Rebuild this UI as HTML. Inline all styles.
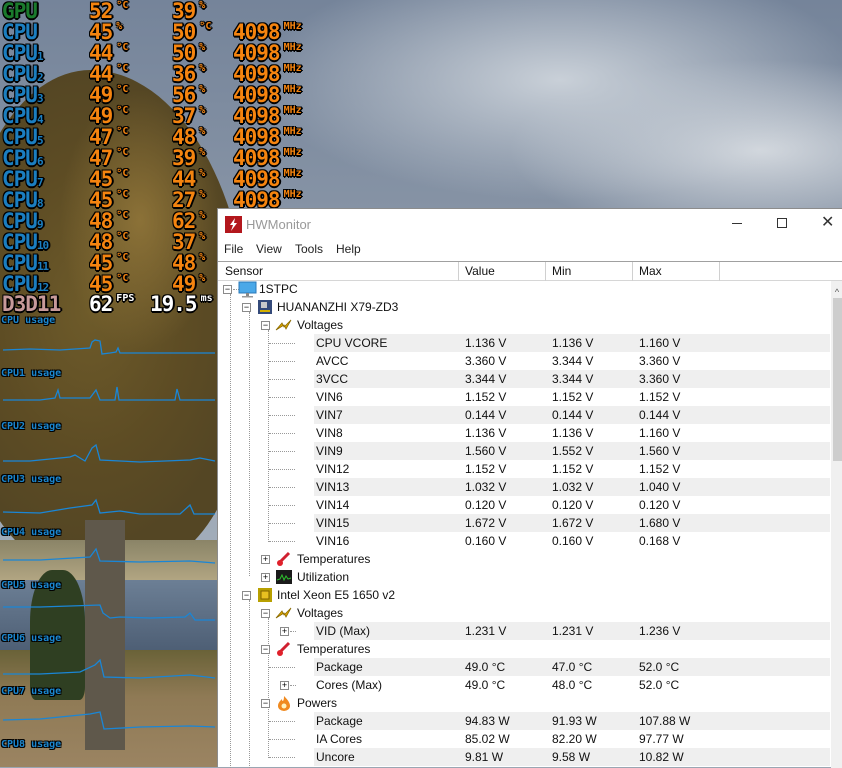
<!DOCTYPE html>
<html><head><meta charset="utf-8">
<style>
*{margin:0;padding:0;box-sizing:border-box}
body{width:842px;height:767px;overflow:hidden;position:relative;background:#9aa6b2;font-family:"Liberation Sans",sans-serif}
.bg{position:absolute;left:0;top:0;width:842px;height:767px;
background:
radial-gradient(ellipse 300px 120px at 560px 80px,#c9d0d8 0%,rgba(201,208,216,0) 100%),
radial-gradient(ellipse 250px 90px at 760px 150px,#d3d8de 0%,rgba(211,216,222,0) 100%),
linear-gradient(180deg,#75849a 0%,#8e9aaa 40%,#b4bec8 100%)}
.tree{position:absolute;left:-40px;top:70px;width:290px;height:500px;border-radius:45% 55% 40% 40%;
background:radial-gradient(ellipse 160px 240px at 130px 240px,#6e5b2a 0%,#5d4c24 60%,#544624 100%)}
.tree2{position:absolute;left:60px;top:90px;width:160px;height:260px;border-radius:50%;background:radial-gradient(ellipse 80px 130px at 80px 130px,rgba(150,122,60,.8),rgba(120,100,50,0))}
.trunk{position:absolute;left:85px;top:520px;width:40px;height:230px;background:#5f584b}
.water{position:absolute;left:0;top:580px;width:220px;height:70px;background:linear-gradient(180deg,#6c7f95,#4e5f75)}
.shore{position:absolute;left:0;top:540px;width:220px;height:45px;background:linear-gradient(180deg,#8a8467,#b6a985)}
.ground{position:absolute;left:0;top:650px;width:220px;height:117px;background:linear-gradient(180deg,#6a6238,#8f7a55 40%,#9b8462)}
.pine{position:absolute;left:30px;top:570px;width:55px;height:130px;background:#2f3f22;border-radius:40% 40% 10% 10%}
.ov{position:absolute;font-family:"DejaVu Sans Mono",monospace;font-weight:bold;font-size:21px;line-height:21px;color:#f5840f;
text-shadow:-1px -1px 0 #000,1px -1px 0 #000,-1px 1px 0 #000,1px 1px 0 #000,0 2px 0 #000,2px 0 0 #000;letter-spacing:-1px}
.lb{color:#1b7ec0}
.u{font-size:10px;vertical-align:top;line-height:10px;margin-left:4px;letter-spacing:0}
.sub{font-size:11px}
.us{position:absolute;left:1px;font-family:"DejaVu Sans Mono",monospace;font-weight:bold;font-size:10px;color:#1a86cf;text-shadow:-1px -1px 0 #000,1px -1px 0 #000,-1px 1px 0 #000,1px 1px 0 #000}
.win{position:absolute;left:217px;top:208px;width:625px;height:559px;background:#fff;border-top:1px solid #8c8c8c;border-left:1px solid #8c8c8c}
.title{position:absolute;left:28px;top:8px;font-size:13px;color:#999}
.menu{position:absolute;top:33px;font-size:12px;color:#222}
.hdr{position:absolute;top:52px;left:0;width:625px;height:20px;background:#fff;border-top:1px solid #a0a0a0;border-bottom:1px solid #d6d6d6}
.hc{position:absolute;top:2px;font-size:12px;color:#111}
.sep{position:absolute;top:0;width:1px;height:19px;background:#d0d0d0}
.row{position:absolute;left:0;width:612px;height:18px;font-size:12px;color:#111}
.row span{position:absolute;top:2px;white-space:nowrap}
.sh{position:absolute;left:96px;width:516px;height:18px;background:#efefef}
.box{position:absolute;width:9px;height:9px;border:1px solid #8a8a8a;background:#fff;font-size:9px;line-height:7px;text-align:center;color:#000}
.dv{position:absolute;border-left:1px dotted #999}
.dh{position:absolute;border-top:1px dotted #999}
</style></head><body>
<div class="bg"></div>
<div class="tree"></div><div class="tree2"></div>
<div class="shore"></div><div class="water"></div><div class="ground"></div>
<div class="pine"></div><div class="trunk"></div>

<div class="ov" style="left:2px;top:1px"><span style="color:#1a7a2c">GPU</span></div>
<div class="ov" style="left:89px;top:1px">52<span class="u">°C</span></div>
<div class="ov" style="left:172px;top:1px">39<span class="u">%</span></div>
<div class="ov lb" style="left:2px;top:22px">CPU</div>
<div class="ov" style="left:89px;top:22px">45<span class="u">%</span></div>
<div class="ov" style="left:172px;top:22px">50<span class="u">°C</span></div>
<div class="ov" style="left:233px;top:22px">4098<span class="u">MHz</span></div>
<div class="ov" style="left:2px;top:294px;color:#c89a9a">D3D11</div>
<div class="ov" style="left:89px;top:294px;color:#fff">62<span class="u">FPS</span></div>
<div class="ov" style="left:150px;top:294px;color:#fff">19.5<span class="u">ms</span></div>

<div class="ov lb" style="left:2px;top:43px">CPU<span class="sub">1</span></div><div class="ov" style="left:89px;top:43px">44<span class="u">°C</span></div><div class="ov" style="left:172px;top:43px">50<span class="u">%</span></div><div class="ov" style="left:233px;top:43px">4098<span class="u">MHz</span></div>
<div class="ov lb" style="left:2px;top:64px">CPU<span class="sub">2</span></div><div class="ov" style="left:89px;top:64px">44<span class="u">°C</span></div><div class="ov" style="left:172px;top:64px">36<span class="u">%</span></div><div class="ov" style="left:233px;top:64px">4098<span class="u">MHz</span></div>
<div class="ov lb" style="left:2px;top:85px">CPU<span class="sub">3</span></div><div class="ov" style="left:89px;top:85px">49<span class="u">°C</span></div><div class="ov" style="left:172px;top:85px">56<span class="u">%</span></div><div class="ov" style="left:233px;top:85px">4098<span class="u">MHz</span></div>
<div class="ov lb" style="left:2px;top:106px">CPU<span class="sub">4</span></div><div class="ov" style="left:89px;top:106px">49<span class="u">°C</span></div><div class="ov" style="left:172px;top:106px">37<span class="u">%</span></div><div class="ov" style="left:233px;top:106px">4098<span class="u">MHz</span></div>
<div class="ov lb" style="left:2px;top:127px">CPU<span class="sub">5</span></div><div class="ov" style="left:89px;top:127px">47<span class="u">°C</span></div><div class="ov" style="left:172px;top:127px">48<span class="u">%</span></div><div class="ov" style="left:233px;top:127px">4098<span class="u">MHz</span></div>
<div class="ov lb" style="left:2px;top:148px">CPU<span class="sub">6</span></div><div class="ov" style="left:89px;top:148px">47<span class="u">°C</span></div><div class="ov" style="left:172px;top:148px">39<span class="u">%</span></div><div class="ov" style="left:233px;top:148px">4098<span class="u">MHz</span></div>
<div class="ov lb" style="left:2px;top:169px">CPU<span class="sub">7</span></div><div class="ov" style="left:89px;top:169px">45<span class="u">°C</span></div><div class="ov" style="left:172px;top:169px">44<span class="u">%</span></div><div class="ov" style="left:233px;top:169px">4098<span class="u">MHz</span></div>
<div class="ov lb" style="left:2px;top:190px">CPU<span class="sub">8</span></div><div class="ov" style="left:89px;top:190px">45<span class="u">°C</span></div><div class="ov" style="left:172px;top:190px">27<span class="u">%</span></div><div class="ov" style="left:233px;top:190px">4098<span class="u">MHz</span></div>
<div class="ov lb" style="left:2px;top:211px">CPU<span class="sub">9</span></div><div class="ov" style="left:89px;top:211px">48<span class="u">°C</span></div><div class="ov" style="left:172px;top:211px">62<span class="u">%</span></div>
<div class="ov lb" style="left:2px;top:232px">CPU<span class="sub">10</span></div><div class="ov" style="left:89px;top:232px">48<span class="u">°C</span></div><div class="ov" style="left:172px;top:232px">37<span class="u">%</span></div>
<div class="ov lb" style="left:2px;top:253px">CPU<span class="sub">11</span></div><div class="ov" style="left:89px;top:253px">45<span class="u">°C</span></div><div class="ov" style="left:172px;top:253px">48<span class="u">%</span></div>
<div class="ov lb" style="left:2px;top:274px">CPU<span class="sub">12</span></div><div class="ov" style="left:89px;top:274px">45<span class="u">°C</span></div><div class="ov" style="left:172px;top:274px">49<span class="u">%</span></div>

<div class="us" style="top:315px">CPU usage</div>
<div class="us" style="top:368px">CPU1 usage</div>
<div class="us" style="top:421px">CPU2 usage</div>
<div class="us" style="top:474px">CPU3 usage</div>
<div class="us" style="top:527px">CPU4 usage</div>
<div class="us" style="top:580px">CPU5 usage</div>
<div class="us" style="top:633px">CPU6 usage</div>
<div class="us" style="top:686px">CPU7 usage</div>
<div class="us" style="top:739px">CPU8 usage</div>
<svg style="position:absolute;left:0;top:0" width="217" height="767">
<g fill="none" stroke="#1a86d6" stroke-width="1.3">
<polyline points="3,350 30,349 60,350 90,348 92,342 95,340 100,341 102,354 110,353 116,352 118,348 120,353 150,353 215,353"/>
<polyline points="3,400 40,400 55,398 58,390 60,398 90,398 96,390 100,400 115,400 117,387 119,400 175,400 177,389 180,400 215,400"/>
<polyline points="3,461 30,461 70,457 75,455 85,461 92,448 96,445 100,460 140,462 190,460 200,458 215,461"/>
<polyline points="3,512 40,513 70,508 92,505 96,500 100,513 120,511 140,514 180,514 190,505 194,514 215,514"/>
<polyline points="3,560 40,560 90,557 96,549 100,561 140,562 190,561 215,563"/>
<polyline points="3,607 40,607 100,605 103,613 110,618 120,617 150,618 185,617 190,613 195,620 215,620"/>
<polyline points="3,674 40,674 80,672 95,665 100,660 104,677 140,678 190,675 215,678"/>
<polyline points="3,720 40,719 70,716 90,714 100,712 104,729 140,727 190,726 215,727"/>
</g></svg>

<div class="win">
<svg style="position:absolute;left:7px;top:7px" width="17" height="17"><rect width="17" height="17" fill="#b3171d"/><path d="M10 2 L5 9 H8 L6 15 L12 7 H9 Z" fill="#fff"/></svg>
<div class="title">HWMonitor</div>
<div style="position:absolute;left:514px;top:14px;width:10px;height:1px;background:#333"></div>
<div style="position:absolute;left:559px;top:9px;width:10px;height:10px;border:1px solid #333"></div>
<div style="position:absolute;left:603px;top:3px;font-size:16px;color:#333">✕</div>
<div class="menu" style="left:6px">File</div>
<div class="menu" style="left:38px">View</div>
<div class="menu" style="left:77px">Tools</div>
<div class="menu" style="left:118px">Help</div>
<div class="hdr">
<div class="hc" style="left:7px">Sensor</div><div class="sep" style="left:240px"></div>
<div class="hc" style="left:247px">Value</div><div class="sep" style="left:327px"></div>
<div class="hc" style="left:334px">Min</div><div class="sep" style="left:414px"></div>
<div class="hc" style="left:421px">Max</div><div class="sep" style="left:501px"></div>
</div>
<div style="position:absolute;left:613px;top:72px;width:12px;height:487px;background:#f0f0f0"></div>
<div style="position:absolute;left:613px;top:78px;width:12px;font-size:9px;color:#555;text-align:center">^</div>
<div style="position:absolute;left:615px;top:89px;width:10px;height:163px;background:#cdcdcd"></div>

<div class="dv" style="left:12px;top:85px;height:474px"></div>
<div class="dv" style="left:31px;top:103px;height:264px"></div>
<div class="dv" style="left:50px;top:121px;height:212px"></div>
<div class="dv" style="left:31px;top:391px;height:168px"></div>
<div class="dv" style="left:50px;top:409px;height:140px"></div>

<div class="row" style="top:71px"><div class="box" style="left:5px;top:5px">−</div><div class="dh" style="left:15px;top:9px;width:6px"></div><svg style="position:absolute;left:20px;top:1px" width="20" height="17"><rect x="1" y="1" width="17" height="11" fill="#4aa8e8" stroke="#2a78b8"/><rect x="8" y="12" width="3" height="3" fill="#888"/><rect x="4" y="15" width="11" height="1.5" fill="#999"/></svg><span style="left:41px">1STPC</span></div>
<div class="row" style="top:89px"><div class="box" style="left:24px;top:5px">−</div><svg style="position:absolute;left:39px;top:1px" width="16" height="16"><rect x="1" y="1" width="14" height="14" fill="#344a7a"/><rect x="4" y="3" width="6" height="6" fill="#c9c9c9"/><rect x="3" y="11" width="10" height="2" fill="#d4b000"/></svg><span style="left:59px">HUANANZHI X79-ZD3</span></div>
<div class="row" style="top:107px"><div class="box" style="left:43px;top:5px">−</div><svg style="position:absolute;left:57px;top:2px" width="19" height="14"><path d="M1 12 L7 5 L9 9 L16 2 L11 11 L9 7 Z" fill="#e0a800" stroke="#8a6a00" stroke-width=".8"/></svg><span style="left:79px">Voltages</span></div>

<div class="sh" style="top:125px"></div><div class="row" style="top:125px"><div class="dh" style="left:51px;top:9px;width:26px"></div><span style="left:98px">CPU VCORE</span><span style="left:247px">1.136 V</span><span style="left:334px">1.136 V</span><span style="left:421px">1.160 V</span></div>
<div class="row" style="top:143px"><div class="dh" style="left:51px;top:9px;width:26px"></div><span style="left:98px">AVCC</span><span style="left:247px">3.360 V</span><span style="left:334px">3.344 V</span><span style="left:421px">3.360 V</span></div>
<div class="sh" style="top:161px"></div><div class="row" style="top:161px"><div class="dh" style="left:51px;top:9px;width:26px"></div><span style="left:98px">3VCC</span><span style="left:247px">3.344 V</span><span style="left:334px">3.344 V</span><span style="left:421px">3.360 V</span></div>
<div class="row" style="top:179px"><div class="dh" style="left:51px;top:9px;width:26px"></div><span style="left:98px">VIN6</span><span style="left:247px">1.152 V</span><span style="left:334px">1.152 V</span><span style="left:421px">1.152 V</span></div>
<div class="sh" style="top:197px"></div><div class="row" style="top:197px"><div class="dh" style="left:51px;top:9px;width:26px"></div><span style="left:98px">VIN7</span><span style="left:247px">0.144 V</span><span style="left:334px">0.144 V</span><span style="left:421px">0.144 V</span></div>
<div class="row" style="top:215px"><div class="dh" style="left:51px;top:9px;width:26px"></div><span style="left:98px">VIN8</span><span style="left:247px">1.136 V</span><span style="left:334px">1.136 V</span><span style="left:421px">1.160 V</span></div>
<div class="sh" style="top:233px"></div><div class="row" style="top:233px"><div class="dh" style="left:51px;top:9px;width:26px"></div><span style="left:98px">VIN9</span><span style="left:247px">1.560 V</span><span style="left:334px">1.552 V</span><span style="left:421px">1.560 V</span></div>
<div class="row" style="top:251px"><div class="dh" style="left:51px;top:9px;width:26px"></div><span style="left:98px">VIN12</span><span style="left:247px">1.152 V</span><span style="left:334px">1.152 V</span><span style="left:421px">1.152 V</span></div>
<div class="sh" style="top:269px"></div><div class="row" style="top:269px"><div class="dh" style="left:51px;top:9px;width:26px"></div><span style="left:98px">VIN13</span><span style="left:247px">1.032 V</span><span style="left:334px">1.032 V</span><span style="left:421px">1.040 V</span></div>
<div class="row" style="top:287px"><div class="dh" style="left:51px;top:9px;width:26px"></div><span style="left:98px">VIN14</span><span style="left:247px">0.120 V</span><span style="left:334px">0.120 V</span><span style="left:421px">0.120 V</span></div>
<div class="sh" style="top:305px"></div><div class="row" style="top:305px"><div class="dh" style="left:51px;top:9px;width:26px"></div><span style="left:98px">VIN15</span><span style="left:247px">1.672 V</span><span style="left:334px">1.672 V</span><span style="left:421px">1.680 V</span></div>
<div class="row" style="top:323px"><div class="dh" style="left:51px;top:9px;width:26px"></div><span style="left:98px">VIN16</span><span style="left:247px">0.160 V</span><span style="left:334px">0.160 V</span><span style="left:421px">0.168 V</span></div>
<div class="row" style="top:341px"><div class="box" style="left:43px;top:5px">+</div><svg style="position:absolute;left:57px;top:1px" width="16" height="16"><line x1="14" y1="2" x2="5" y2="11" stroke="#d02030" stroke-width="3"/><circle cx="5" cy="12" r="3" fill="#e0202a"/></svg><span style="left:79px">Temperatures</span></div>
<div class="row" style="top:359px"><div class="box" style="left:43px;top:5px">+</div><svg style="position:absolute;left:58px;top:2px" width="16" height="14"><rect width="16" height="14" fill="#1a1a1a"/><polyline points="1,10 4,9 6,5 8,10 10,6 12,9 15,8" fill="none" stroke="#2ec02e"/></svg><span style="left:79px">Utilization</span></div>
<div class="row" style="top:377px"><div class="box" style="left:24px;top:5px">−</div><svg style="position:absolute;left:39px;top:1px" width="16" height="16"><rect x="1" y="1" width="14" height="14" fill="#b8a000"/><rect x="4" y="4" width="8" height="8" fill="#e8c020" stroke="#806000"/></svg><span style="left:59px">Intel Xeon E5 1650 v2</span></div>
<div class="row" style="top:395px"><div class="box" style="left:43px;top:5px">−</div><svg style="position:absolute;left:57px;top:2px" width="19" height="14"><path d="M1 12 L7 5 L9 9 L16 2 L11 11 L9 7 Z" fill="#e0a800" stroke="#8a6a00" stroke-width=".8"/></svg><span style="left:79px">Voltages</span></div>
<div class="sh" style="top:413px"></div><div class="row" style="top:413px"><div class="box" style="left:62px;top:5px">+</div><div class="dh" style="left:72px;top:9px;width:6px"></div><span style="left:98px">VID (Max)</span><span style="left:247px">1.231 V</span><span style="left:334px">1.231 V</span><span style="left:421px">1.236 V</span></div>
<div class="row" style="top:431px"><div class="box" style="left:43px;top:5px">−</div><svg style="position:absolute;left:57px;top:1px" width="16" height="16"><line x1="14" y1="2" x2="5" y2="11" stroke="#d02030" stroke-width="3"/><circle cx="5" cy="12" r="3" fill="#e0202a"/></svg><span style="left:79px">Temperatures</span></div>
<div class="sh" style="top:449px"></div><div class="row" style="top:449px"><div class="dh" style="left:51px;top:9px;width:26px"></div><span style="left:98px">Package</span><span style="left:247px">49.0 °C</span><span style="left:334px">47.0 °C</span><span style="left:421px">52.0 °C</span></div>
<div class="row" style="top:467px"><div class="box" style="left:62px;top:5px">+</div><div class="dh" style="left:72px;top:9px;width:6px"></div><span style="left:98px">Cores (Max)</span><span style="left:247px">49.0 °C</span><span style="left:334px">48.0 °C</span><span style="left:421px">52.0 °C</span></div>
<div class="row" style="top:485px"><div class="box" style="left:43px;top:5px">−</div><svg style="position:absolute;left:59px;top:1px" width="14" height="16"><path d="M7 1 C11 5 13 8 13 11 A6 5 0 0 1 1 11 C1 8 3 6 5 4 C5 7 7 7 7 1Z" fill="#f08a20"/><circle cx="7" cy="11" r="2.5" fill="#fff3c0"/></svg><span style="left:79px">Powers</span></div>
<div class="sh" style="top:503px"></div><div class="row" style="top:503px"><div class="dh" style="left:51px;top:9px;width:26px"></div><span style="left:98px">Package</span><span style="left:247px">94.83 W</span><span style="left:334px">91.93 W</span><span style="left:421px">107.88 W</span></div>
<div class="row" style="top:521px"><div class="dh" style="left:51px;top:9px;width:26px"></div><span style="left:98px">IA Cores</span><span style="left:247px">85.02 W</span><span style="left:334px">82.20 W</span><span style="left:421px">97.77 W</span></div>
<div class="sh" style="top:539px"></div><div class="row" style="top:539px"><div class="dh" style="left:51px;top:9px;width:26px"></div><span style="left:98px">Uncore</span><span style="left:247px">9.81 W</span><span style="left:334px">9.58 W</span><span style="left:421px">10.82 W</span></div>
</div>
</body></html>
